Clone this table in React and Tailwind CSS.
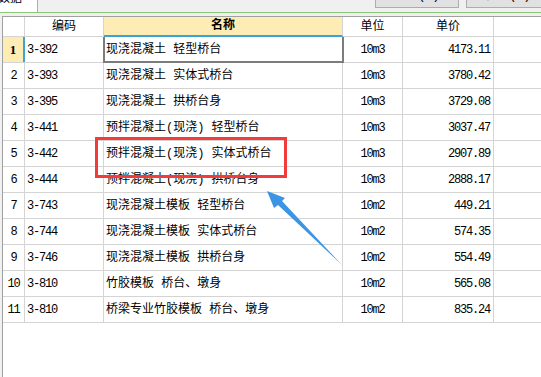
const rows = [
  ["1", "3-392", "现浇混凝土 轻型桥台", "10m3", "4173.11"],
  ["2", "3-393", "现浇混凝土 实体式桥台", "10m3", "3780.42"],
  ["3", "3-395", "现浇混凝土 拱桥台身", "10m3", "3729.08"],
  ["4", "3-441", "预拌混凝土(现浇) 轻型桥台", "10m3", "3037.47"],
  ["5", "3-442", "预拌混凝土(现浇) 实体式桥台", "10m3", "2907.89"],
  ["6", "3-444", "预拌混凝土(现浇) 拱桥台身", "10m3", "2888.17"],
  ["7", "3-743", "现浇混凝土模板 轻型桥台", "10m2", "449.21"],
  ["8", "3-744", "现浇混凝土模板 实体式桥台", "10m2", "574.35"],
  ["9", "3-746", "现浇混凝土模板 拱桥台身", "10m2", "554.49"],
  ["10", "3-810", "竹胶模板 桥台、墩身", "10m2", "565.08"],
  ["11", "3-810", "桥梁专业竹胶模板 桥台、墩身", "10m2", "835.24"],
];

const cjk = "font-['Liberation_Mono','Noto_Sans_CJK_SC',monospace] text-[12px]";
const mono = "font-['Liberation_Mono',monospace] text-[12px] tracking-[-1.2px]";

const Row = ({ r, i }) => {
  const sel = i === 0;
  return (
    <div className="flex h-[26px] border-b border-[#d4d4d4]">
      <div
        className={
          sel
            ? "w-[22px] flex items-center justify-center bg-[#fdedb5] border-r-2 border-[#3aa3d8] font-bold font-['Liberation_Serif',serif] text-[13px]"
            : `w-[22px] flex items-center justify-center border-r border-[#d4d4d4] ${mono}`
        }
      >
        {r[0]}
      </div>
      <div className={`w-[79px] flex items-center pl-[2px] border-r border-[#d4d4d4] ${mono}`}>
        {r[1]}
      </div>
      <div className={`relative w-[239px] flex items-center pl-[2px] border-r border-[#d4d4d4] whitespace-pre ${cjk}`}>
        {r[2]}
        {sel && (
          <div className="absolute left-[-1px] right-[-2px] top-0 bottom-[-1px] border-2 border-t-0 border-[#7c7c7c]" />
        )}
      </div>
      <div className={`w-[60px] flex items-center justify-center border-r border-[#d4d4d4] ${mono}`}>
        {r[3]}
      </div>
      <div className={`w-[91px] flex items-center justify-end pr-[3px] border-r border-[#d4d4d4] ${mono}`}>
        {r[4]}
      </div>
    </div>
  );
};

export default function App() {
  return (
    <div className="relative w-[541px] h-[377px] overflow-hidden bg-[#f0f0f0] text-black flex flex-col">
      {/* top strip: tab and buttons, mostly scrolled off */}
      <div className="h-[13px] flex bg-[#f0f0f0] border-b border-[#8cc878] overflow-hidden shrink-0">
        <div className="w-[38px] bg-white border-r border-[#8cc878] overflow-hidden">
          <div className={`-mt-[10px] -ml-[2px] ${cjk}`}>数据</div>
        </div>
        <div className="flex-1" />
        <div className="flex gap-[7px] -mt-[16px] h-[24px]">
          <div className={`w-[84px] h-[24px] flex items-center justify-center bg-[#e1e1e1] border border-[#adadad] ${cjk}`}>
            插入(I)
          </div>
          <div className={`w-[84px] h-[24px] flex items-center justify-center bg-[#e1e1e1] border border-[#adadad] -mr-[9px] ${cjk}`}>
            替换(R)
          </div>
        </div>
      </div>
      <div className="h-[3px] shrink-0" />

      <div className="flex-1 ml-[2px] bg-white border-l border-t border-[#a0a0a0]">
        {/* header */}
        <div className={`flex h-[20px] border-b border-[#d4d4d4] ${cjk}`}>
          <div className="w-[22px] border-r border-[#d4d4d4]" />
          <div className="w-[79px] flex items-center justify-center border-r border-[#d4d4d4]">编码</div>
          <div className="w-[239px] flex items-center justify-center bg-[#fdedb5] border-r border-[#d4d4d4] border-b-2 border-b-[#3aa3d8] -mb-[1px] font-bold">
            名称
          </div>
          <div className="w-[60px] flex items-center justify-center border-r border-[#d4d4d4]">单位</div>
          <div className="w-[91px] flex items-center justify-center border-r border-[#d4d4d4]">单价</div>
        </div>
        {rows.map((r, i) => (
          <Row key={i} r={r} i={i} />
        ))}
      </div>

      {/* annotation: red box */}
      <div className="absolute left-[95px] top-[137px] w-[192px] h-[41px] border-[3px] border-[#f23b3b]" />

      {/* annotation: blue arrow */}
      <svg className="absolute left-0 top-0" width="541" height="377" viewBox="0 0 541 377">
        <polygon
          points="267,191 285,198 282,201 342,265 278,205 274,208"
          fill="#3b94e4"
        />
      </svg>
    </div>
  );
}
